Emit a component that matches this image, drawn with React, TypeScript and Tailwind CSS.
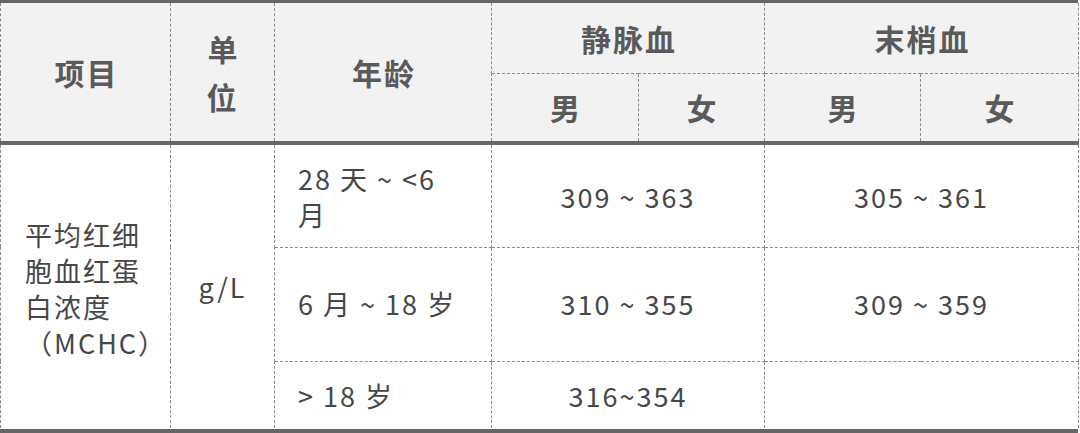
import React from "react";

const dash = "border border-dashed border-[#8a8a8a]";
const botSolid = "border-b-[4px] border-b-[#666] [border-bottom-style:solid]";

export default function App() {
  const font = { fontFamily: '"Noto Sans CJK SC", "Noto Sans", sans-serif' };
  return (
    <div className="w-[1080px] h-[433px] bg-white overflow-hidden" style={font}>
      <div className="w-[1078px] h-[433px] border-t-[3px] border-b-[4px] border-[#666] flex flex-col">
        <table className="border-collapse w-[1078px] table-fixed text-[#474747]">
          <colgroup>
            <col className="w-[170px]" />
            <col className="w-[104px]" />
            <col className="w-[217px]" />
            <col className="w-[147px]" />
            <col className="w-[126px]" />
            <col className="w-[156px]" />
            <col className="w-[158px]" />
          </colgroup>
          <thead className="bg-[#f2f2f2] text-[#5a5a5a] font-black text-[30px] tracking-[2px]">
            <tr className="h-[70px]">
              <th rowSpan={2} className={`${dash} border-t-0 ${botSolid}`}>
                <span className="pl-[2px]">项目</span>
              </th>
              <th rowSpan={2} className={`${dash} border-t-0 ${botSolid} leading-[48px]`}>
                <span className="pl-[2px]">单<br />位</span>
              </th>
              <th rowSpan={2} className={`${dash} border-t-0 ${botSolid}`}>
                <span className="pl-[2px]">年龄</span>
              </th>
              <th colSpan={2} className={`${dash} border-t-0 pt-[2px]`}>
                <span className="pl-[2px]">静脉血</span>
              </th>
              <th colSpan={2} className={`${dash} border-t-0 pt-[2px]`}>
                <span className="pl-[2px]">末梢血</span>
              </th>
            </tr>
            <tr className="h-[70px]">
              <th className={`${dash} ${botSolid}`}><span className="pl-[2px]">男</span></th>
              <th className={`${dash} ${botSolid}`}><span className="pl-[2px]">女</span></th>
              <th className={`${dash} ${botSolid}`}><span className="pl-[2px]">男</span></th>
              <th className={`${dash} ${botSolid}`}><span className="pl-[2px]">女</span></th>
            </tr>
          </thead>
          <tbody className="text-[27px] tracking-[2px] leading-[36px]">
            <tr className="h-[104px]">
              <td rowSpan={3} className={`${dash} border-b-0 pl-[24px] align-middle pt-[4px]`}>
                平均红细<br />胞血红蛋<br />白浓度<br />（MCHC）
              </td>
              <td rowSpan={3} className={`${dash} border-b-0 text-center`}>
                g/L
              </td>
              <td className={`${dash} pl-[23px] pr-[20px] pt-[2px]`}>28 天 ~ &lt;6 月</td>
              <td colSpan={2} className={`${dash} text-center pt-[2px]`}>309 ~ 363</td>
              <td colSpan={2} className={`${dash} text-center pt-[2px]`}>305 ~ 361</td>
            </tr>
            <tr className="h-[114px]">
              <td className={`${dash} pl-[23px]`}>6 月 ~ 18 岁</td>
              <td colSpan={2} className={`${dash} text-center`}>310 ~ 355</td>
              <td colSpan={2} className={`${dash} text-center`}>309 ~ 359</td>
            </tr>
            <tr className="h-[67px]">
              <td className={`${dash} border-b-0 pl-[23px] pt-[2px]`}>&gt; 18 岁</td>
              <td colSpan={2} className={`${dash} border-b-0 text-center pt-[2px]`}>316~354</td>
              <td colSpan={2} className={`${dash} border-b-0`}></td>
            </tr>
          </tbody>
        </table>
      </div>
    </div>
  );
}
